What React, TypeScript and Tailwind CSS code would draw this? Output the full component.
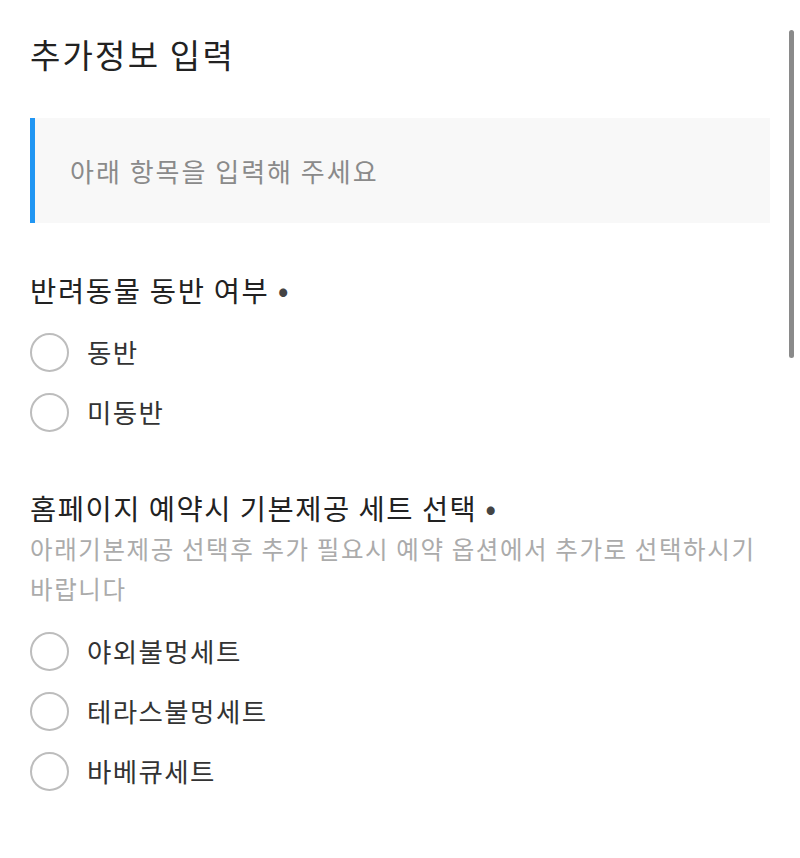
import React from 'react';

const petOptions = ['동반', '미동반'];
const setOptions = ['야외불멍세트', '테라스불멍세트', '바베큐세트'];

const Radio = ({ label }: { label: string }) => (
  <label className="flex items-center h-[60px] gap-[18px]">
    <span className="w-[39px] h-[39px] rounded-full border-2 border-[#bdbdbd] bg-white shrink-0" />
    <span className="text-[26.5px] leading-[40px] tracking-[1.4px] text-[#333]">{label}</span>
  </label>
);

export default function App() {
  return (
    <div
      className="relative w-[800px] h-[858px] bg-white overflow-hidden"
      style={{ fontFamily: '"Noto Sans CJK KR", "Noto Sans", sans-serif' }}
    >
      <div className="px-[30px] pt-[32px]">
        <h1 className="text-[33px] leading-[44px] tracking-[2.2px] text-[#222]">추가정보 입력</h1>

        <div className="mt-[42px] border-l-[5px] border-[#2196f3] bg-[#f8f8f8] pl-[35px] py-[35px]">
          <p className="text-[26px] leading-[35px] tracking-[2px] text-[#8a8a8a]">아래 항목을 입력해 주세요</p>
        </div>

        <div className="mt-[47px]">
          <h2 className="text-[28.5px] leading-[40px] tracking-[1.7px] text-[#222]">
            반려동물 동반 여부 <span className="text-[#444] text-[32px] leading-[0]">•</span>
          </h2>
          <div className="mt-[12px] flex flex-col">
            {petOptions.map((o) => (
              <Radio key={o} label={o} />
            ))}
          </div>
        </div>

        <div className="mt-[46px]">
          <h2 className="text-[28.5px] leading-[40px] tracking-[1.5px] text-[#222]">
            홈페이지 예약시 기본제공 세트 선택 <span className="text-[#444] text-[32px] leading-[0]">•</span>
          </h2>
          <p className="mt-[1px] text-[24.5px] leading-[40px] tracking-[1.6px] text-[#ababab] break-keep">
            아래기본제공 선택후 추가 필요시 예약 옵션에서 추가로 선택하시기 바랍니다
          </p>
          <div className="mt-[12px] flex flex-col">
            {setOptions.map((o) => (
              <Radio key={o} label={o} />
            ))}
          </div>
        </div>
      </div>

      {/* overlay scroll indicator */}
      <div className="absolute right-[6px] top-[30px] w-[5px] h-[328px] rounded-full bg-[#8a8a8a]" />
    </div>
  );
}
